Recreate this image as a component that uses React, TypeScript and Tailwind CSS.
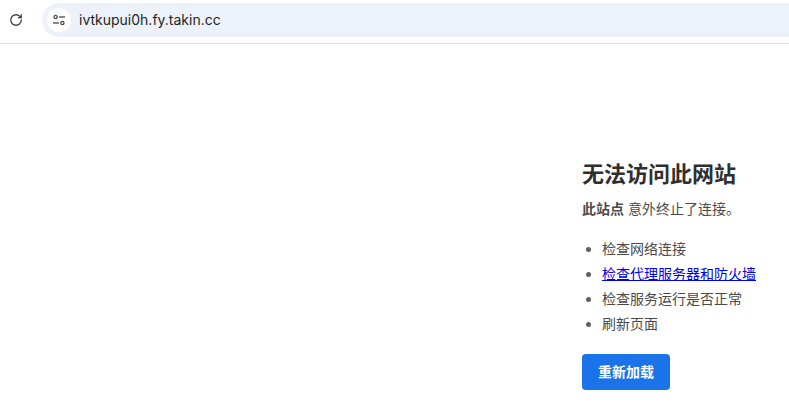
import { RotateCw } from 'lucide-react';

const cjk = { fontFamily: '"Inter", "Noto Sans CJK SC", sans-serif' };

export default function App() {
  return (
    <div className="w-[789px] h-[410px] overflow-hidden bg-white" style={cjk}>
      <div className="h-11 flex items-start pt-[3px] bg-white border-b border-[#dcdee0]">
        <div className="w-8 h-[34px] flex items-center justify-center">
          <RotateCw className="w-[14px] h-[14px] text-[#3c3c3c]" strokeWidth={2.2} />
        </div>
        <div className="h-[34px] flex-1 ml-[10px] bg-[#edf2fa] rounded-l-full flex items-center pl-[5px]">
          <div className="w-6 h-6 rounded-full bg-white flex items-center justify-center">
            <svg width="14" height="14" viewBox="0 0 14 14" fill="none" stroke="#474747" strokeWidth="1.3">
              <circle cx="3.6" cy="4" r="1.6" />
              <path d="M7 4h6" />
              <circle cx="10.4" cy="10" r="1.6" />
              <path d="M1 10h6" />
            </svg>
          </div>
          <span className="ml-2 text-sm text-[#1f1f1f]">ivtkupui0h.fy.takin.cc</span>
        </div>
      </div>
      <div className="pl-[582px] pt-[114px] text-[#4a4a4a]">
        <h1 className="text-[22px] leading-8 font-semibold text-[#2f2f2f]">无法访问此网站</h1>
        <p className="mt-[9px] text-sm leading-5"><b className="font-semibold">此站点</b> 意外终止了连接。</p>
        <ul className="mt-[17px] text-sm leading-[25px] list-disc pl-5 marker:text-[#5f5f5f]">
          <li>检查网络连接</li>
          <li><a href="#" className="text-[#0000ee] underline">检查代理服务器和防火墙</a></li>
          <li>检查服务运行是否正常</li>
          <li>刷新页面</li>
        </ul>
        <button className="mt-[18px] w-[88px] h-9 rounded-[4px] bg-[#1a73e8] text-white text-sm font-semibold">重新加载</button>
      </div>
    </div>
  );
}
